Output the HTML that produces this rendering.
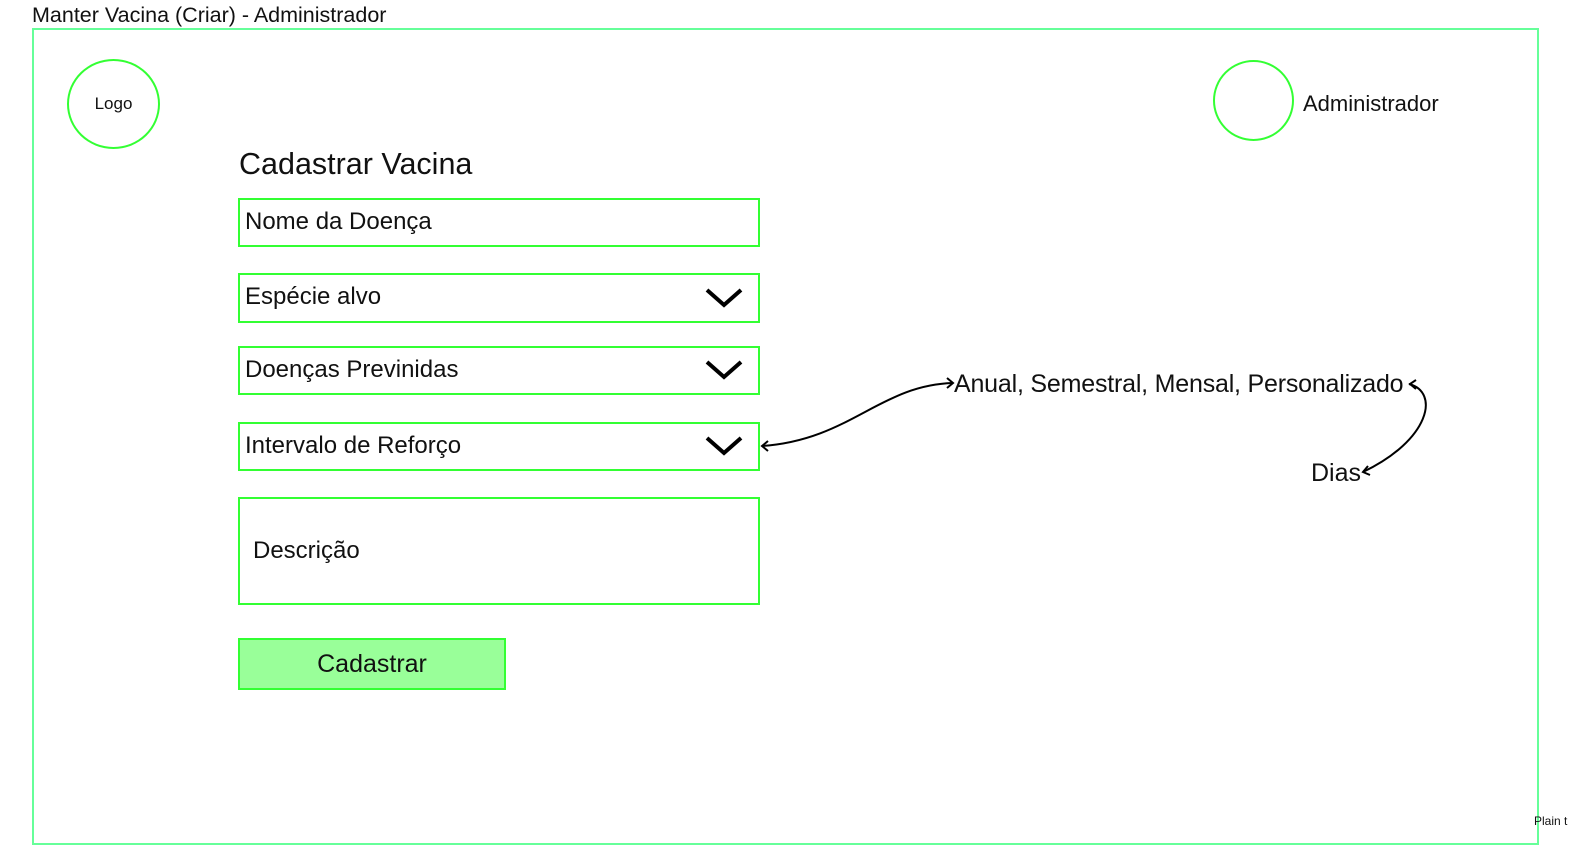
<!DOCTYPE html>
<html><head><meta charset="utf-8"><style>
body{margin:0;width:1582px;height:863px;background:#fff;position:relative;overflow:hidden;font-family:"Liberation Sans",Arial,sans-serif;color:#111}
.a{position:absolute}
.f{position:absolute;border:2px solid #33ff33;box-sizing:border-box;font-size:24px;line-height:44px;padding-left:5px}
</style></head><body>
<div class="a" style="left:32px;top:3px;font-size:21.5px">Manter Vacina (Criar) - Administrador</div>
<div class="a" style="left:32px;top:28px;width:1507px;height:817px;border:2px solid #66ff99;box-sizing:border-box"></div>
<div class="a" style="left:67px;top:59px;width:93px;height:90px;border:2px solid #33ff33;border-radius:50%;box-sizing:border-box;text-align:center;line-height:86px;font-size:17px">Logo</div>
<div class="a" style="left:1213px;top:60px;width:81px;height:81px;border:2px solid #33ff33;border-radius:50%;box-sizing:border-box"></div>
<div class="a" style="left:1303px;top:91px;font-size:22px">Administrador</div>
<div class="a" style="left:239px;top:147px;font-size:30.5px">Cadastrar Vacina</div>
<div class="f" style="left:238px;top:198px;width:522px;height:49px">Nome da Doença</div>
<div class="f" style="left:238px;top:273px;width:522px;height:50px">Espécie alvo</div>
<div class="f" style="left:238px;top:346px;width:522px;height:49px">Doenças Previnidas</div>
<div class="f" style="left:238px;top:422px;width:522px;height:49px">Intervalo de Reforço</div>
<div class="f" style="left:238px;top:497px;width:522px;height:108px;line-height:104px;padding-left:13px">Descrição</div>
<div class="a" style="left:238px;top:638px;width:268px;height:52px;border:2px solid #33ff33;background:#99ff99;box-sizing:border-box;text-align:center;line-height:48px;font-size:25px">Cadastrar</div>
<div class="a" style="left:954px;top:370px;font-size:25px;letter-spacing:-0.2px">Anual, Semestral, Mensal, Personalizado</div>
<div class="a" style="left:1311px;top:459px;font-size:25px">Dias</div>
<div class="a" style="left:1534px;top:814px;font-size:12px">Plain t</div>
<svg class="a" style="left:0;top:0" width="1582" height="863" fill="none" stroke="#000">
<g stroke-width="4" stroke-linejoin="miter"><path d="M707 290l17 15 17-15"/><path d="M707 362l17 15 17-15"/><path d="M707 438l17 15 17-15"/></g>
<g stroke-width="2"><path d="M762 446C850 440 880 385 953 383"/><path d="M768 441l-6 5 6 5M947 378l6 5-6 5"/>
<path d="M1409 384C1440 392 1430 440 1363 472"/><path d="M1416 380l-6 4 6 5M1368 466l-5 6 7 3"/></g>
</svg>
</body></html>
